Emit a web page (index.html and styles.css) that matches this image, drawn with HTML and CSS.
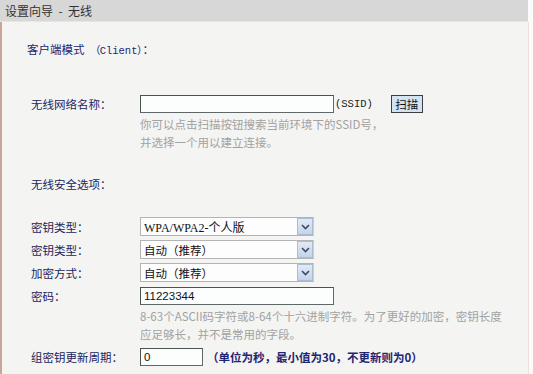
FILE: index.html
```html
<!DOCTYPE html>
<html lang="zh-CN">
<head>
  <meta charset="UTF-8">
  <title>设置向导 - 无线</title>
  <link rel="stylesheet" href="styles.css">
</head>
<body>

<div class="titlebar">设置向导&nbsp;&nbsp;-&nbsp;&nbsp;无线</div>

<div class="panel">
  <p class="section">客户端模式&nbsp;&nbsp;<span class="latin">（Client）</span>：</p>

  <div class="row row-ssid">
    <span class="label">无线网络名称：</span>
    <input class="text wide" type="text" value="">
    <span class="latin ssid">(SSID)</span>
    <button class="btn" type="button">扫描</button>
  </div>
  <div class="hint hint-ssid">
    你可以点击扫描按钮搜索当前环境下的SSID号，<br>
    并选择一个用以建立连接。
  </div>

  <p class="label sec-title">无线安全选项：</p>

  <div class="row row-first">
    <span class="label">密钥类型：</span>
    <div class="select"><span class="val latin-val">WPA/WPA2-个人版</span><span class="arrow"><svg width="9" height="6" viewBox="0 0 9 6"><path d="M1 1 L4.5 4.5 L8 1" fill="none" stroke="#3c4a66" stroke-width="1.6"/></svg></span></div>
  </div>
  <div class="row row-sel">
    <span class="label">密钥类型：</span>
    <div class="select"><span class="val">自动（推荐）</span><span class="arrow"><svg width="9" height="6" viewBox="0 0 9 6"><path d="M1 1 L4.5 4.5 L8 1" fill="none" stroke="#3c4a66" stroke-width="1.6"/></svg></span></div>
  </div>
  <div class="row row-sel">
    <span class="label">加密方式：</span>
    <div class="select"><span class="val">自动（推荐）</span><span class="arrow"><svg width="9" height="6" viewBox="0 0 9 6"><path d="M1 1 L4.5 4.5 L8 1" fill="none" stroke="#3c4a66" stroke-width="1.6"/></svg></span></div>
  </div>
  <div class="row row-pass">
    <span class="label">密码：</span>
    <input class="text wide" type="text" value="11223344">
  </div>
  <div class="hint hint-pass">
    8-63个ASCII码字符或8-64个十六进制字符。为了更好的加密，密钥长度<br>
    应足够长，并不是常用的字段。
  </div>

  <div class="row row-period">
    <span class="label">组密钥更新周期：</span>
    <input class="text short" type="text" value="0">
    <span class="note">（单位为秒，最小值为30，不更新则为0）</span>
  </div>
</div>

</body>
</html>
```

FILE: styles.css
```css
body {
  margin: 0;
  width: 533px;
  height: 374px;
  overflow: hidden;
  background-color: #fbfbfb;
  font-family: "Noto Sans CJK SC", "DejaVu Sans", sans-serif;
  font-size: 11.5px;
}

.titlebar {
  height: 21px;
  line-height: 21px;
  padding-left: 5px;
  background-color: #d7d7d7;
  border-bottom: 1px solid #e6e6e6;
  color: #333;
  font-size: 12px;
  width: 523px;
}

.panel {
  box-sizing: border-box;
  width: 529px;
  height: 352px;
  background-color: #f4f4f3;
  border-left: 2px solid #c9a49b;
  border-right: 1px solid #f3dede;
  padding-top: 19px;
}

p {
  margin: 0;
}

.section {
  padding-left: 25px;
  line-height: 16px;
  color: #1f2570;
}

.latin {
  font-family: "Liberation Mono", monospace;
  font-size: 10.5px;
}

.label {
  color: #22255a;
}

.row {
  display: flex;
  align-items: center;
  padding-left: 29px;
}

.row .label {
  width: 109px;
}

.sec-title {
  padding-left: 29px;
  line-height: 16px;
  margin-top: 25px;
}

.row-ssid {
  margin-top: 36px;
  height: 18px;
}

.text {
  box-sizing: border-box;
  height: 18px;
  margin: 0;
  padding: 0 3px;
  border: 1px solid #5f6868;
  border-top-color: #4a5252;
  border-left-color: #4a5252;
  background-color: #fcfefe;
  font-family: "Liberation Sans", sans-serif;
  font-size: 11.5px;
  color: #111;
  outline: none;
}

.wide {
  width: 194px;
}

.short {
  width: 63px;
}

.ssid {
  margin-left: 1px;
  color: #222;
}

.btn {
  margin-left: 18px;
  height: 18px;
  width: 32px;
  padding: 0;
  border: 1px solid #3a3f44;
  background-color: #d3e3f1;
  color: #111;
  font-family: "Noto Sans CJK SC", sans-serif;
  font-size: 11.5px;
  line-height: 15px;
}

.hint {
  padding-left: 138px;
  color: #a2a2a2;
  line-height: 17.5px;
}

.hint-ssid {
  margin-top: 3px;
}

.row-first {
  margin-top: 25px;
  height: 19px;
}

.row-sel {
  margin-top: 4px;
  height: 19px;
}

.select {
  box-sizing: border-box;
  width: 174px;
  height: 19px;
  border: 1px solid #b4b4b4;
  border-right-color: #cfcfcf;
  background-color: #fdfdfd;
  display: flex;
  align-items: center;
  justify-content: space-between;
}

.val {
  padding-left: 3px;
  color: #111;
}

.latin-val {
  font-family: "Liberation Serif", "Noto Sans CJK SC", serif;
  font-size: 12px;
}

.arrow {
  box-sizing: border-box;
  width: 16px;
  height: 17px;
  border: 1px solid #aebcd2;
  background: linear-gradient(#e2eaf6, #c3d4ea);
  display: flex;
  align-items: center;
  justify-content: center;
}

.row-pass {
  margin-top: 5px;
  height: 18px;
}

.hint-pass {
  margin-top: 3px;
}

.row-period {
  margin-top: 5px;
  height: 18px;
}

.note {
  margin-left: 4px;
  color: #1f2570;
  font-weight: bold;
}
```
